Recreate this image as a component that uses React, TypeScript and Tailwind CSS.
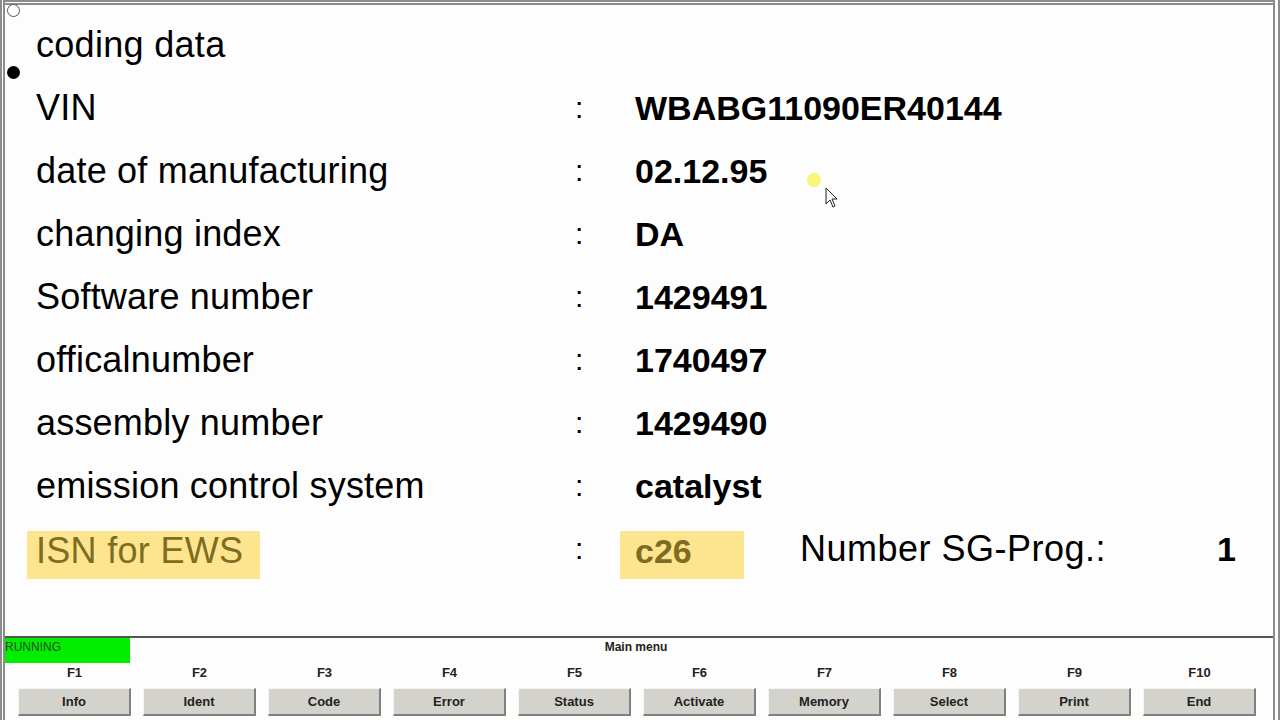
import React from "react";

const rows = [
  { label: "VIN", value: "WBABG11090ER40144" },
  { label: "date of manufacturing", value: "02.12.95" },
  { label: "changing index", value: "DA" },
  { label: "Software number", value: "1429491" },
  { label: "officalnumber", value: "1740497" },
  { label: "assembly number", value: "1429490" },
  { label: "emission control system", value: "catalyst" },
];

const keys = [
  { f: "F1", name: "Info" },
  { f: "F2", name: "Ident" },
  { f: "F3", name: "Code" },
  { f: "F4", name: "Error" },
  { f: "F5", name: "Status" },
  { f: "F6", name: "Activate" },
  { f: "F7", name: "Memory" },
  { f: "F8", name: "Select" },
  { f: "F9", name: "Print" },
  { f: "F10", name: "End" },
];

const App = () => {
  return (
    <div
      className="relative w-[1280px] h-[720px] overflow-hidden bg-[#fdfdfd] flex flex-col border-l-[5px] border-r-[7px] border-double border-[#8c8c8c] text-black"
      style={{ fontFamily: '"Liberation Sans", Arial, sans-serif' }}
    >
      {/* data panel */}
      <div className="h-[636px] border-t-[5px] border-double border-[#8c8c8c] pt-[8px] flex flex-col">
        <div className="h-[63px] flex items-center pl-[31px] text-[36px] tracking-[0.3px] leading-none">coding data</div>
        {rows.map((r) => (
          <div key={r.label} className="h-[63px] flex items-center pl-[31px]">
            <div className="w-[539px] text-[36px] tracking-[0.2px] leading-none">{r.label}</div>
            <div className="w-[60px] text-[30px] leading-none">:</div>
            <div className="text-[34px] font-bold leading-none">{r.value}</div>
          </div>
        ))}
        <div className="h-[63px] flex items-center pl-[22px]">
          <div className="w-[548px] flex">
            <span className="bg-[#fde58f] text-[#7d6c22] text-[36px] tracking-[0.3px] leading-none h-[48px] w-[233px] pl-[9px] pt-[2px] mt-[12px]">
              ISN for EWS
            </span>
          </div>
          <div className="w-[45px] text-[30px] leading-none">:</div>
          <div className="bg-[#fde58f] text-[#7d6c22] text-[34px] font-bold leading-none h-[48px] w-[124px] pl-[15px] pt-[3px] mt-[12px]">
            c26
          </div>
          <div className="ml-[56px] w-[417px] text-[36px] tracking-[0.5px] leading-none">Number SG-Prog.:</div>
          <div className="text-[34px] font-bold leading-none">1</div>
        </div>
      </div>

      {/* footer */}
      <div className="flex-1 border-t-2 border-[#555555] relative">
        <div className="flex h-[26px]">
          <div className="w-[125px] h-[25px] bg-[#00ee00] text-[#1f4a1f] text-[12px] leading-none pt-[3px]">RUNNING</div>
          <div className="flex-1 text-center text-[12px] font-bold leading-none pt-[3px] pr-[131px] text-[#222]">
            Main menu
          </div>
        </div>
        <div className="flex pl-[13px] gap-[12px]">
          {keys.map((k) => (
            <div key={k.f} className="w-[113px] flex flex-col items-center">
              <div className="h-[24px] text-[13px] font-bold leading-none pt-[2px] text-[#222]">{k.f}</div>
              <div className="w-[113px] h-[28px] bg-[#d4d2cc] border-t border-l border-[#f4f4f4] border-r-2 border-b-2 border-r-[#808080] border-b-[#808080] flex items-center justify-center text-[13px] font-bold text-[#222]">
                {k.name}
              </div>
            </div>
          ))}
        </div>
      </div>

      {/* radio marks */}
      <div className="absolute left-[2px] top-[4px] w-[13px] h-[13px] rounded-full border border-[#555] bg-white" />
      <div className="absolute left-[2px] top-[66px] w-[13px] h-[13px] rounded-full bg-black" />

      {/* mouse pointer */}
      <div className="absolute left-[802px] top-[173px] w-[14px] h-[14px] rounded-full bg-[#f8f56a] opacity-90" />
      <svg className="absolute left-[820px] top-[187px]" width="14" height="22" viewBox="0 0 14 22">
        <path d="M1 1 L1 17 L5 13 L8 20 L10 19 L7 12 L12 12 Z" fill="#fff" stroke="#222" strokeWidth="1" strokeLinejoin="round" />
      </svg>
    </div>
  );
};

export default App;
